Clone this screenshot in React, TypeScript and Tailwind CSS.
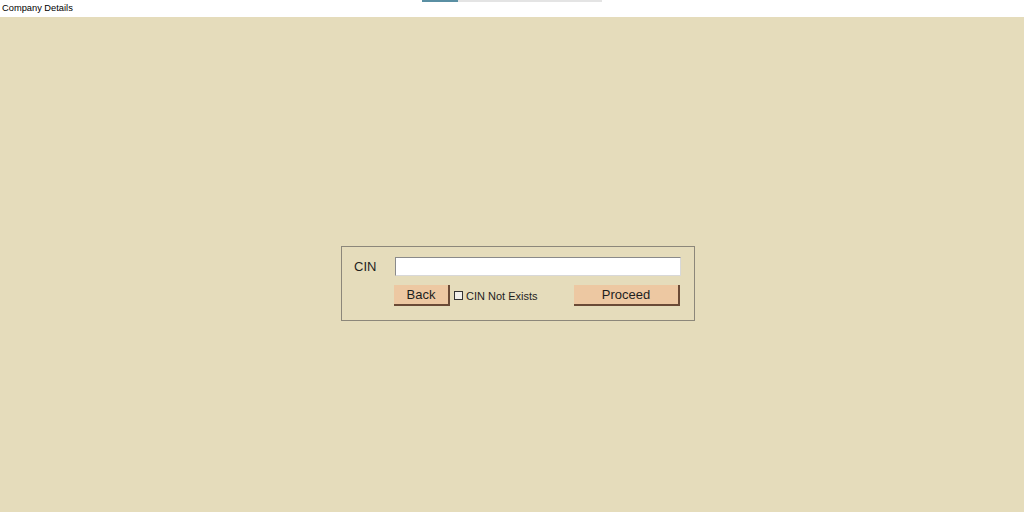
export default function App(): JSX.Element {
  return (
    <div className="h-[512px] w-[1024px] flex flex-col bg-[#e5dcbb] font-['Liberation_Sans',Arial,sans-serif] text-[#1e1e1e]">
      {/* Title strip with loading line */}
      <div className="h-[17px] bg-white flex items-start shrink-0">
        <div className="w-[422px] pl-[2px] pt-[3px] text-[9.3px] leading-[11px] text-black">
          Company Details
        </div>
        <div className="w-[36px] h-[2px] bg-[#5a8fa3]" />
        <div className="w-[144px] h-[2px] bg-[#e4e4e4]" />
      </div>

      <div className="flex-1 pl-[341px] pt-[229px]">
        <div className="w-[354px] h-[75px] border border-[#8c877a] pl-[12px] pt-[10px] flex flex-col gap-[9px]">
          <div className="flex items-center">
            <label className="w-[41px] text-[13px] leading-[19px]">CIN</label>
            <input
              type="text"
              className="w-[286px] h-[19px] bg-white border border-t-[#8a8a8a] border-l-[#8a8a8a] border-b-[#d8d8d8] border-r-[#d8d8d8] outline-none px-1 text-[12px]"
            />
          </div>
          <div className="flex items-center pl-[40px]">
            <button className="w-[56px] h-[21px] bg-[#edc8a2] border-b-2 border-r-2 border-[#6a4a36] text-[13px] leading-[19px]">
              Back
            </button>
            <span className="ml-[4px] w-[9px] h-[9px] border border-[#333] bg-[#f2f0ea]" />
            <span className="ml-[3px] text-[11px] leading-[14px]">CIN Not Exists</span>
            <button className="ml-auto mr-[14px] w-[106px] h-[21px] bg-[#edc8a2] border-b-2 border-r-2 border-[#6a4a36] text-[13px] leading-[19px]">
              Proceed
            </button>
          </div>
        </div>
      </div>
    </div>
  )
}
